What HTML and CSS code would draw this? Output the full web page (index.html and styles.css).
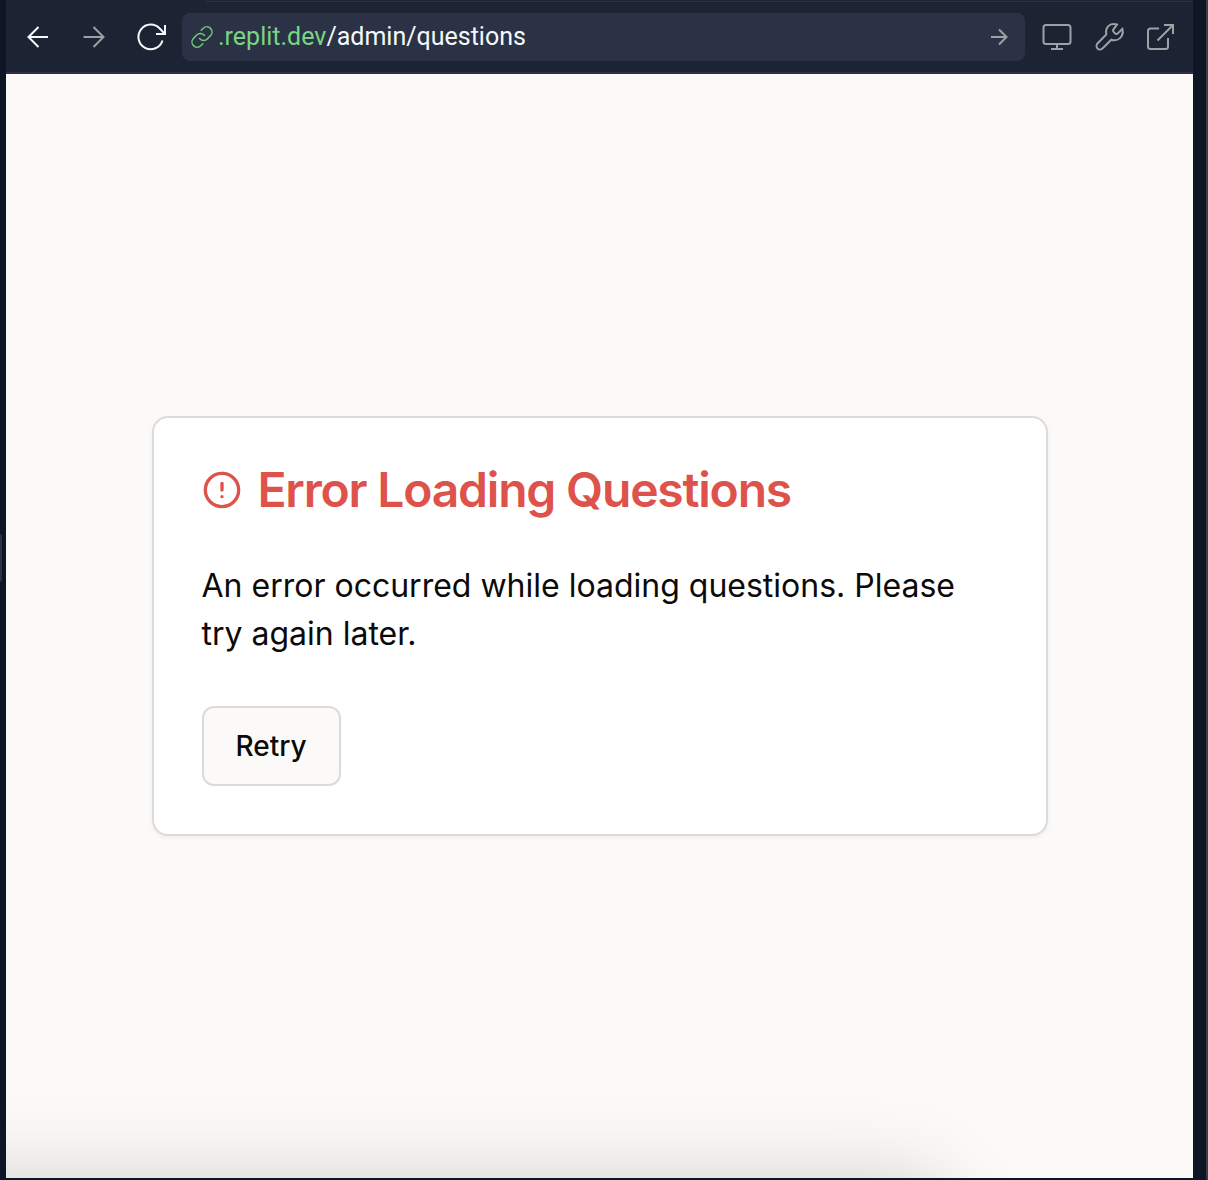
FILE: index.html
```html
<!DOCTYPE html>
<html lang="en">
<head>
<meta charset="utf-8">
<meta name="viewport" content="width=device-width, initial-scale=1">
<title>Error Loading Questions</title>
<link rel="stylesheet" href="styles.css">
</head>
<body>
<div class="workspace">
  <div class="pane">
    <header class="toolbar">
      <div class="tabs-edge"></div>
      <nav class="toolbar-row" aria-label="Preview">
        <button class="icon-button" type="button" aria-label="Back">
          <svg class="icon bright" width="24" height="24" viewBox="0 0 24 24"><path d="M22 12H2.500M12.500 2 2.500 12l10 10"/></svg>
        </button>
        <button class="icon-button" type="button" aria-label="Forward">
          <svg class="icon" width="24" height="24" viewBox="0 0 24 24"><path d="M1.500 12H21.500M11.500 2l10 10-10 10"/></svg>
        </button>
        <button class="icon-button reload" type="button" aria-label="Reload">
          <svg class="icon bright" width="32" height="32" viewBox="0 0 32 32"><path d="M28.500 19.500A12.300 12.300 0 1 1 26 7.800l4.500 4.700M31 4v9H22"/></svg>
        </button>
        <form class="address">
          <svg class="icon link" width="24" height="24" viewBox="0 0 24 24"><path d="M9.500 13.500a5.200 5.200 0 0 0 7.800.4l3.300-3.300a5.200 5.200 0 0 0-7.350-7.350l-2 2"/><path d="M14.500 10.500a5.200 5.200 0 0 0-7.800-.4l-3.300 3.300a5.200 5.200 0 0 0 7.350 7.350l2-2"/></svg>
          <a class="url" href="/admin/questions"><span class="host">.replit.dev</span>/admin/questions</a>
          <button class="icon-button go" type="button" aria-label="Go">
            <svg class="icon" width="20" height="20" viewBox="0 0 20 20"><path d="M2 10h15.500M10 2.500l7.500 7.500-7.500 7.500"/></svg>
          </button>
        </form>
        <div class="tools">
          <button class="icon-button" type="button" aria-label="Device size">
            <svg class="icon" width="32" height="32" viewBox="0 0 32 32"><rect x="2.500" y="4" width="27" height="19" rx="2.500"/><path d="M16 23v5M10 28h12"/></svg>
          </button>
          <button class="icon-button" type="button" aria-label="Developer tools">
            <svg class="icon" width="32" height="32" viewBox="0 0 32 32"><path d="M24 3.500c-4-1.500-8.500 0-10.300 4-1 2-.9 4-.4 6L4.700 22.200c-1.500 1.500-1.500 3.900-.2 5.300 1.500 1.400 3.800 1.300 5.200-.2l8.600-8.600c4 1.300 8.300-.2 10.400-3.800 1.300-2.300 1.500-4.800.7-7.100L24.800 12.400c-.8.8-2 .8-2.700 0l-1.500-1.500c-.8-.8-.8-2 0-2.700Z"/></svg>
          </button>
          <button class="icon-button" type="button" aria-label="Open in new tab">
            <svg class="icon" width="32" height="32" viewBox="0 0 32 32"><path d="M14 7.500H5.500C4 7.500 3 8.500 3 10v15.500C3 27 4 28 5.500 28h15c1.500 0 2.500-1 2.500-2.500V17M12.500 19.500 27.500 4.500M19 4h9v9"/></svg>
          </button>
        </div>
      </nav>
    </header>
    <main class="preview">
      <section class="card">
        <h1 class="card-title">
          <svg class="alert" width="40" height="40" viewBox="0 0 24 24"><circle cx="12" cy="12" r="10"/><path d="M12 8v4M12 16h.01"/></svg>
          Error Loading Questions
        </h1>
        <p class="card-text">An error occurred while loading questions. Please try again later.</p>
        <button class="retry" type="button">Retry</button>
      </section>
    </main>
  </div>
</div>
</body>
</html>
```
FILE: styles.css
```css
* {
  box-sizing: border-box;
}

body {
  margin: 0;
  background: #0e1525;
  font-family: Inter, "Liberation Sans", sans-serif;
}

.workspace {
  position: relative;
  display: flex;
  min-height: 100vh;
  padding: 0 13px 2px 6px;
  border-right: 2px solid #3a3c48;
}

/* Handle for resizing the pane */
.workspace::before {
  content: "";
  position: absolute;
  top: 534px;
  left: 0;
  width: 2px;
  height: 48px;
  border-radius: 0 2px 2px 0;
  background: #2b3245;
}

.pane {
  display: flex;
  flex: 1;
  flex-direction: column;
}

.toolbar {
  border-bottom: 2px solid #2b3245;
  background: #1c2333;
}

.tabs-edge {
  height: 2px;
  margin-left: 200px;
  border-bottom: 1px solid #2b3245;
}

.toolbar-row {
  display: flex;
  align-items: center;
  height: 70px;
  padding: 0 16px 0 20px;
}

.icon-button {
  display: flex;
  padding: 0;
  border: 0;
  background: none;
}

.toolbar-row > .icon-button + .icon-button {
  margin-left: 32px;
}

.toolbar-row > .reload.reload {
  margin-left: 28px;
}

.icon {
  display: block;
  fill: none;
  stroke: #9da2a6;
  stroke-width: 2;
}

.bright {
  stroke: #f5f9fc;
}

.address {
  display: flex;
  flex: 1;
  align-items: center;
  height: 48px;
  margin: 0 16px 0 16px;
  padding: 0 16px 0 8px;
  border-radius: 8px;
  background: #2b3245;
}

.link {
  stroke: #72cc7a;
  stroke-width: 1.5;
  stroke-linecap: round;
}

.url {
  flex: 1;
  margin-left: 4px;
  color: #f5f9fc;
  font: 25px/32px Roboto, "Liberation Sans", sans-serif;
  text-decoration: none;
}

.host {
  color: #7bd484;
}

.tools {
  display: flex;
  gap: 20px;
}

.preview {
  position: relative;
  display: flex;
  flex: 1;
  align-items: center;
  justify-content: center;
  padding: 32px;
  overflow: hidden;
  background: #fcfaf8;
}

/* Shadow cast by a panel docked below the preview */
.preview::after {
  content: "";
  position: absolute;
  top: 100%;
  right: 21%;
  left: -10%;
  height: 200px;
  border-radius: 32px;
  box-shadow: 0 0 80px rgba(0, 0, 0, 0.17);
}

.card {
  width: 100%;
  max-width: 896px;
  padding: 48px;
  border: 2px solid #dddbd9;
  border-radius: 16px;
  background: #fff;
  box-shadow: 0 2px 4px rgba(0, 0, 0, 0.05);
}

.card-title {
  display: flex;
  gap: 16px;
  align-items: center;
  margin: 0;
  color: #de524c;
  font-size: 48px;
  font-weight: 600;
  line-height: 48px;
  letter-spacing: -0.025em;
}

.alert {
  fill: none;
  stroke: currentColor;
  stroke-width: 2;
  stroke-linecap: round;
}

.card-text {
  margin: 48px 0;
  color: #0c0a09;
  font-size: 32px;
  line-height: 48px;
}

.retry {
  height: 80px;
  padding: 0 32px;
  border: 2px solid #dddbd9;
  border-radius: 12px;
  background: #fcfaf8;
  color: #0c0a09;
  font: 500 28px/40px Inter, "Liberation Sans", sans-serif;
}
```
